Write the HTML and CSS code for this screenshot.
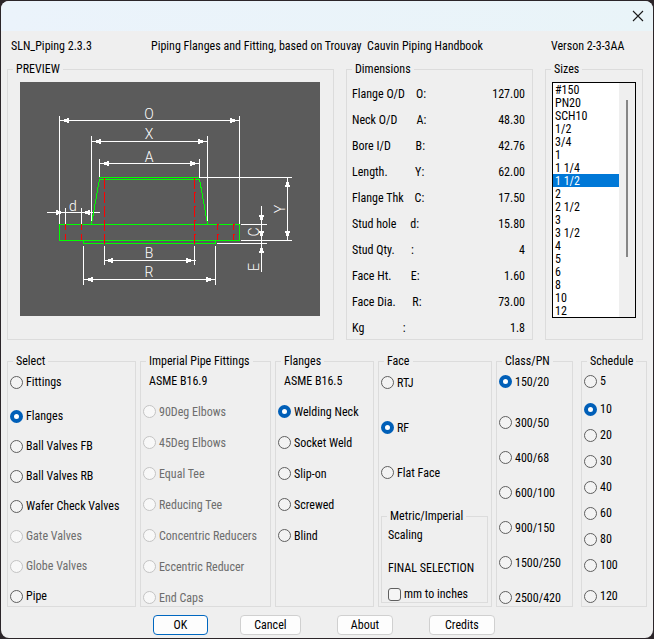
FILE: index.html
```html
<!DOCTYPE html>
<html lang="en">
<head>
<meta charset="utf-8">
<title>SLN_Piping</title>
<link rel="stylesheet" href="styles.css">
</head>
<body>
<main class="dialog">
  <div class="titlebar">
    <button class="close" type="button" aria-label="Close">
      <svg width="12" height="12" viewBox="0 0 12 12"><path d="M1 1L11 11M11 1L1 11" fill="none" stroke="#1a1a1a" stroke-width="1.1"/></svg>
    </button>
  </div>
  <header class="heading">
    <span>SLN_Piping 2.3.3</span>
    <span>Piping Flanges and Fitting, based on Trouvay&nbsp; Cauvin Piping Handbook</span>
    <span>Verson 2-3-3AA</span>
  </header>

  <div class="row top">
    <fieldset>
      <legend>PREVIEW</legend>
      <svg class="drawing" viewBox="0 0 300 234" role="img" aria-label="Welding neck flange">
        <rect width="300" height="234" fill="#5b5b5b"/>
        <g class="white">
          <path d="M39.5 34V142M219.5 34V142M39 38.5H220M71.5 54V142M187.5 54V142M71 59.5H188M79.5 77V96M179.5 77V96M79 81.5H180"/>
          <path d="M180 95.5H272M221 158.5H272M267.5 95V159M221 142.5H247M197 161.5H247M241.5 124V190"/>
          <path d="M27 130.5H80M45.5 126V142M61.5 126V142M84.5 164V183M174.5 164V183M84 178.5H176M63.5 164V203M195.5 164V203M63 197.5H196"/>
        </g>
        <g class="heads">
          <path d="M40 38.5L49 36V41ZM219 38.5L210 36V41ZM72 59.5L81 57V62ZM187 59.5L178 57V62ZM80 81.5L89 79V84ZM179 81.5L170 79V84Z"/>
          <path d="M85 178.5L93 176V181ZM174 178.5L166 176V181ZM64 197.5L73 195V200ZM195 197.5L186 195V200ZM44 130.5L36 128V133ZM62 130.5L70 128V133Z"/>
          <path d="M267.5 96L265 105H270ZM267.5 158L265 149H270ZM241.5 142L239 133H244ZM241.5 158L239 149H244ZM241.5 162L239 171H244Z"/>
        </g>
        <path class="green" d="M79 95.5H179M79 97.5H180M79.5 97L71.5 142M179.5 97L187.5 142M39.5 142.5H219.5V158.5H39.5ZM63.5 159V161.5H195.5V159"/>
        <path class="red" d="M84.5 96V162M174.5 96V162"/>
        <path class="red bolt" d="M45.5 142V158M61.5 142V158M197.5 142V158M213.5 142V158"/>
        <path class="tick" d="M198 142.5H199M198 152.5H199M214 142.5H215M214 152.5H215M175 110.5H176M175 124.5H176M175 138.5H176M175 152.5H176"/>
        <g class="tags">
          <text x="129" y="37">O</text>
          <text x="129" y="57">X</text>
          <text x="129" y="80">A</text>
          <text x="129" y="176">B</text>
          <text x="129" y="195">R</text>
          <text x="53" y="129">d</text>
          <text transform="translate(265 127) rotate(-90)">Y</text>
          <text transform="translate(239 150) rotate(-90)">C</text>
          <text transform="translate(239 185) rotate(-90)">E</text>
        </g>
      </svg>
    </fieldset>

    <fieldset>
      <legend>Dimensions</legend>
      <table class="dims">
        <tr><th>Flange O/D    O:</th><td>127.00</td></tr>
        <tr><th>Neck O/D       A:</th><td>48.30</td></tr>
        <tr><th>Bore I/D         B:</th><td>42.76</td></tr>
        <tr><th>Length.          Y:</th><td>62.00</td></tr>
        <tr><th>Flange Thk    C:</th><td>17.50</td></tr>
        <tr><th>Stud hole     d:</th><td>15.80</td></tr>
        <tr><th>Stud Qty.      :</th><td>4</td></tr>
        <tr><th>Face Ht.       E:</th><td>1.60</td></tr>
        <tr><th>Face Dia.      R:</th><td>73.00</td></tr>
        <tr><th>Kg              :</th><td>1.8</td></tr>
      </table>
    </fieldset>

    <fieldset>
      <legend>Sizes</legend>
      <div class="listbox">
        <select size="18" aria-label="Sizes">
          <option>#150</option><option>PN20</option><option>SCH10</option><option>1/2</option><option>3/4</option><option>1</option><option>1 1/4</option><option selected>1 1/2</option><option>2</option><option>2 1/2</option><option>3</option><option>3 1/2</option><option>4</option><option>5</option><option>6</option><option>8</option><option>10</option><option>12</option>
        </select>
        <div class="scrollbar"></div>
      </div>
    </fieldset>
  </div>

  <div class="row bottom">
    <fieldset>
      <legend>Select</legend>
      <div class="choices step30">
        <label class="lead"><input type="radio" name="kind">Fittings</label>
        <label><input type="radio" name="kind" checked>Flanges</label>
        <label><input type="radio" name="kind">Ball Valves FB</label>
        <label><input type="radio" name="kind">Ball Valves RB</label>
        <label><input type="radio" name="kind">Wafer Check Valves</label>
        <label><input type="radio" name="kind" disabled>Gate Valves</label>
        <label><input type="radio" name="kind" disabled>Globe Valves</label>
        <label><input type="radio" name="kind">Pipe</label>
      </div>
    </fieldset>

    <fieldset>
      <legend>Imperial Pipe Fittings</legend>
      <div class="choices step31">
        <p>ASME B16.9</p>
        <label><input type="radio" name="fitting" disabled>90Deg Elbows</label>
        <label><input type="radio" name="fitting" disabled>45Deg Elbows</label>
        <label><input type="radio" name="fitting" disabled>Equal Tee</label>
        <label><input type="radio" name="fitting" disabled>Reducing Tee</label>
        <label><input type="radio" name="fitting" disabled>Concentric Reducers</label>
        <label><input type="radio" name="fitting" disabled>Eccentric Reducer</label>
        <label><input type="radio" name="fitting" disabled>End Caps</label>
      </div>
    </fieldset>

    <fieldset>
      <legend>Flanges</legend>
      <div class="choices step31">
        <p>ASME B16.5</p>
        <label><input type="radio" name="flange" checked>Welding Neck</label>
        <label><input type="radio" name="flange">Socket Weld</label>
        <label><input type="radio" name="flange">Slip-on</label>
        <label><input type="radio" name="flange">Screwed</label>
        <label><input type="radio" name="flange">Blind</label>
      </div>
    </fieldset>

    <fieldset>
      <legend>Face</legend>
      <div class="choices step45">
        <label><input type="radio" name="face">RTJ</label>
        <label><input type="radio" name="face" checked>RF</label>
        <label><input type="radio" name="face">Flat Face</label>
      </div>
      <fieldset class="scaling">
        <legend>Metric/Imperial</legend>
        <p>Scaling</p>
        <p class="final">FINAL SELECTION</p>
        <label><input type="checkbox">mm to inches</label>
      </fieldset>
    </fieldset>

    <fieldset>
      <legend>Class/PN</legend>
      <div class="choices step35">
        <label class="lead"><input type="radio" name="class" checked>150/20</label>
        <label><input type="radio" name="class">300/50</label>
        <label><input type="radio" name="class">400/68</label>
        <label><input type="radio" name="class">600/100</label>
        <label><input type="radio" name="class">900/150</label>
        <label><input type="radio" name="class">1500/250</label>
        <label><input type="radio" name="class">2500/420</label>
      </div>
    </fieldset>

    <fieldset class="schedule">
      <legend>Schedule</legend>
      <div class="choices step26">
        <label class="lead"><input type="radio" name="schedule">5</label>
        <label><input type="radio" name="schedule" checked>10</label>
        <label><input type="radio" name="schedule">20</label>
        <label><input type="radio" name="schedule">30</label>
        <label><input type="radio" name="schedule">40</label>
        <label><input type="radio" name="schedule">60</label>
        <label><input type="radio" name="schedule">80</label>
        <label class="tail"><input type="radio" name="schedule">100</label>
        <label><input type="radio" name="schedule">120</label>
      </div>
    </fieldset>
  </div>

  <footer class="actions">
    <button class="ok" type="button">OK</button>
    <button class="cancel" type="button">Cancel</button>
    <button class="about" type="button">About</button>
    <button class="credits" type="button">Credits</button>
  </footer>
</main>
</body>
</html>
```
FILE: styles.css
```css
* { box-sizing: border-box; }

body {
  margin: 0;
  padding: 1px;
  background: #2b2529;
  color: #000;
  font: 12px/16px "Roboto Condensed", Lato, sans-serif;
}

p { margin: 0; }

.dialog {
  background: #efefef;
  border-radius: 8px;
  overflow: hidden;
}

.titlebar {
  display: flex;
  justify-content: flex-end;
  height: 30px;
  background: linear-gradient(90deg, #ebf3fb, #e9f4f8);
}

.close {
  width: 30px;
  padding: 0;
  border: 0;
  background: none;
}

.close svg { display: block; margin: 0 auto; }

.heading {
  display: grid;
  grid-template-columns: 140fr 400fr 93fr;
  padding: 7px 9px 7px 10px;
  white-space: nowrap;
}

.row { display: grid; }

.top {
  grid-template-columns: 327fr 187fr 98fr;
  gap: 12px;
  padding: 0 10px 0 6px;
}

.bottom {
  grid-template-columns: 129fr 131fr 99fr 114fr 77fr 70fr;
  gap: 4px;
  margin-top: 13px;
  padding: 0 6px;
}

fieldset {
  min-width: 0;
  margin: 0;
  padding: 0;
  border: 1px solid #dcdcdc;
}

legend {
  margin-left: 5px;
  padding: 0 3px;
  white-space: nowrap;
}

.schedule { margin-left: 4px; }

.drawing {
  display: block;
  margin: 5px 13px 23px 12px;
  shape-rendering: crispEdges;
}

.white { fill: none; stroke: #fff; }
.heads { fill: #fff; }
.green { fill: none; stroke: #0f0; }
.red { fill: none; stroke: #f00; stroke-dasharray: 11 3; }
.bolt { stroke-dasharray: 6 4; }
.tick { fill: none; stroke: #f00; }
.tags { fill: #fff; font: 300 14px/1 Roboto, sans-serif; text-anchor: middle; }

.dims {
  width: 100%;
  margin-bottom: -2px;
  padding: 4px 7px 0 5px;
  border-spacing: 0;
}

.dims th,
.dims td {
  height: 26px;
  padding: 0;
  font-weight: normal;
  text-align: left;
  white-space: pre;
}

.dims td { text-align: right; }

.listbox {
  display: flex;
  margin: 5px 6px 0 6px;
  border: 1px solid #000;
}

.listbox select {
  flex: 1;
  min-width: 0;
  height: 234px;
  padding: 0;
  border: 0;
  border-radius: 0;
  outline: 0;
  overflow: hidden;
  background: #fff;
  color: #000;
  font: inherit;
}

.listbox option {
  height: 13px;
  min-height: 13px;
  padding: 0 2px;
  line-height: 13px;
}

.listbox option:checked {
  background: #0078d7 linear-gradient(#0078d7, #0078d7);
  color: #fff;
}

.scrollbar {
  width: 16px;
  padding: 17px 7px 60px;
  background: #868686 content-box;
}

.choices { padding-left: 2px; }

.choices label,
.choices p {
  display: flex;
  align-items: center;
  white-space: nowrap;
}

.choices p { padding-left: 6px; }

input {
  flex: none;
  width: 13px;
  height: 13px;
  margin: 0 3px 0 0;
  appearance: none;
  border: 1px solid #5f5f5f;
  border-radius: 50%;
  background: #f3f3f3;
}

input:checked { border: 4px solid #005fb8; background: #fff; }
input:disabled { border-color: #c4c4c4; background: #f8f8f8; }
input[type="checkbox"] { border-radius: 3px; background: #f5f5f5; }
label:has(input:disabled) { color: #6d6d6d; }

.step26 label { height: 26px; }
.step30 label { height: 30px; }
.step31 label, .step31 p { height: 31px; }
.step35 label { height: 35px; }
.step45 label { height: 45px; }

.step26 { margin: -1px 0 -3px; }
.step30 { margin: -2px 0 -5px; }
.step31 { margin: -4px 0 -7px; }
.step35 { margin: -5px 0 -9px; }
.step45 { margin: -9px 0 0; }

.step30 .lead { margin-bottom: 4px; }
.step35 .lead { margin-bottom: 6px; }
.step26 .lead { margin-bottom: 2px; }
.step26 .tail { margin-bottom: 5px; }

.scaling { margin: 13px 3px 2px 2px; }
.scaling p, .scaling label { margin-left: 6px; white-space: nowrap; }
.scaling p { margin-top: 3px; }
.scaling .final { margin-top: 17px; }
.scaling label { display: flex; align-items: center; margin-top: 10px; }

.actions {
  display: flex;
  margin-left: 23.3%;
  padding: 8px 0 3px;
}

.actions button {
  height: 20px;
  padding: 0;
  border: 1px solid #d0d0d0;
  border-radius: 4px;
  background: #fdfdfd;
  color: #000;
  font: inherit;
}

.actions .ok { width: 55px; margin-right: 32px; border-color: #0067c0; }
.actions .cancel { width: 61px; margin-right: 36px; }
.actions .about { width: 56px; margin-right: 36px; }
.actions .credits { width: 66px; }
```
